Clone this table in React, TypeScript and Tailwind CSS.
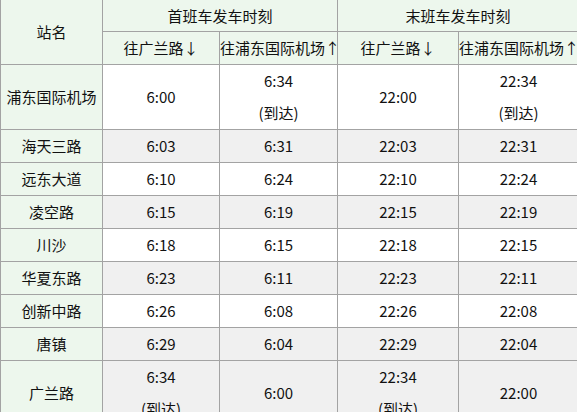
const rows: [string, string, string, string, string, boolean][] = [
  ["浦东国际机场", "6:00", "6:34|(到达)", "22:00", "22:34|(到达)", false],
  ["海天三路", "6:03", "6:31", "22:03", "22:31", true],
  ["远东大道", "6:10", "6:24", "22:10", "22:24", false],
  ["凌空路", "6:15", "6:19", "22:15", "22:19", true],
  ["川沙", "6:18", "6:15", "22:18", "22:15", false],
  ["华夏东路", "6:23", "6:11", "22:23", "22:11", true],
  ["创新中路", "6:26", "6:08", "22:26", "22:08", false],
  ["唐镇", "6:29", "6:04", "22:29", "22:04", true],
  ["广兰路", "6:34|(到达)", "6:00", "22:34|(到达)", "22:00", true]
];

function Cell({ text }: { text: string }) {
  const lines = text.split("|");
  return (
    <td className="border-r border-b border-[#a3a3a3] p-0 text-center align-middle">
      {lines.map((line) => (
        <div key={line} className="h-8 leading-8">
          {line}
        </div>
      ))}
    </td>
  );
}

export default function App() {
  return (
    <div className="h-[412px] w-[577px] overflow-hidden bg-white">
      <table
        className="w-[579px] table-fixed border-separate border-spacing-0 border-l border-[#a3a3a3] text-[15px] text-[#111]"
        style={{ fontFamily: '"Noto Sans CJK SC", "Noto Sans", sans-serif' }}
      >
        <colgroup>
          <col className="w-[102px]" />
          <col className="w-[117px]" />
          <col className="w-[118px]" />
          <col className="w-[121px]" />
          <col className="w-[120px]" />
        </colgroup>
        <thead className="bg-[#edf7ed]">
          <tr>
            <th rowSpan={2} className="border-r border-b border-[#a3a3a3] p-0 font-normal">
              站名
            </th>
            <th colSpan={2} className="h-[31px] border-r border-b border-[#a3a3a3] p-0 font-normal leading-[31px]">
              首班车发车时刻
            </th>
            <th colSpan={2} className="h-[31px] border-r border-b border-[#a3a3a3] p-0 font-normal leading-[31px]">
              末班车发车时刻
            </th>
          </tr>
          <tr>
            <th className="h-8 border-r border-b border-[#a3a3a3] p-0 font-normal leading-8">往广兰路↓</th>
            <th className="h-8 border-r border-b border-[#a3a3a3] p-0 font-normal leading-8 whitespace-nowrap">往浦东国际机场↑</th>
            <th className="h-8 border-r border-b border-[#a3a3a3] p-0 font-normal leading-8">往广兰路↓</th>
            <th className="h-8 border-r border-b border-[#a3a3a3] p-0 font-normal leading-8 whitespace-nowrap">往浦东国际机场↑</th>
          </tr>
        </thead>
        <tbody>
          {rows.map(([name, a, b, c, d, shaded]) => (
            <tr key={name} className={shaded ? "bg-[#f0f0f0]" : "bg-white"}>
              <td className="border-r border-b border-[#a3a3a3] bg-[#edf7ed] p-0 text-center align-middle">
                {name}
              </td>
              <Cell text={a} />
              <Cell text={b} />
              <Cell text={c} />
              <Cell text={d} />
            </tr>
          ))}
        </tbody>
      </table>
    </div>
  );
}
